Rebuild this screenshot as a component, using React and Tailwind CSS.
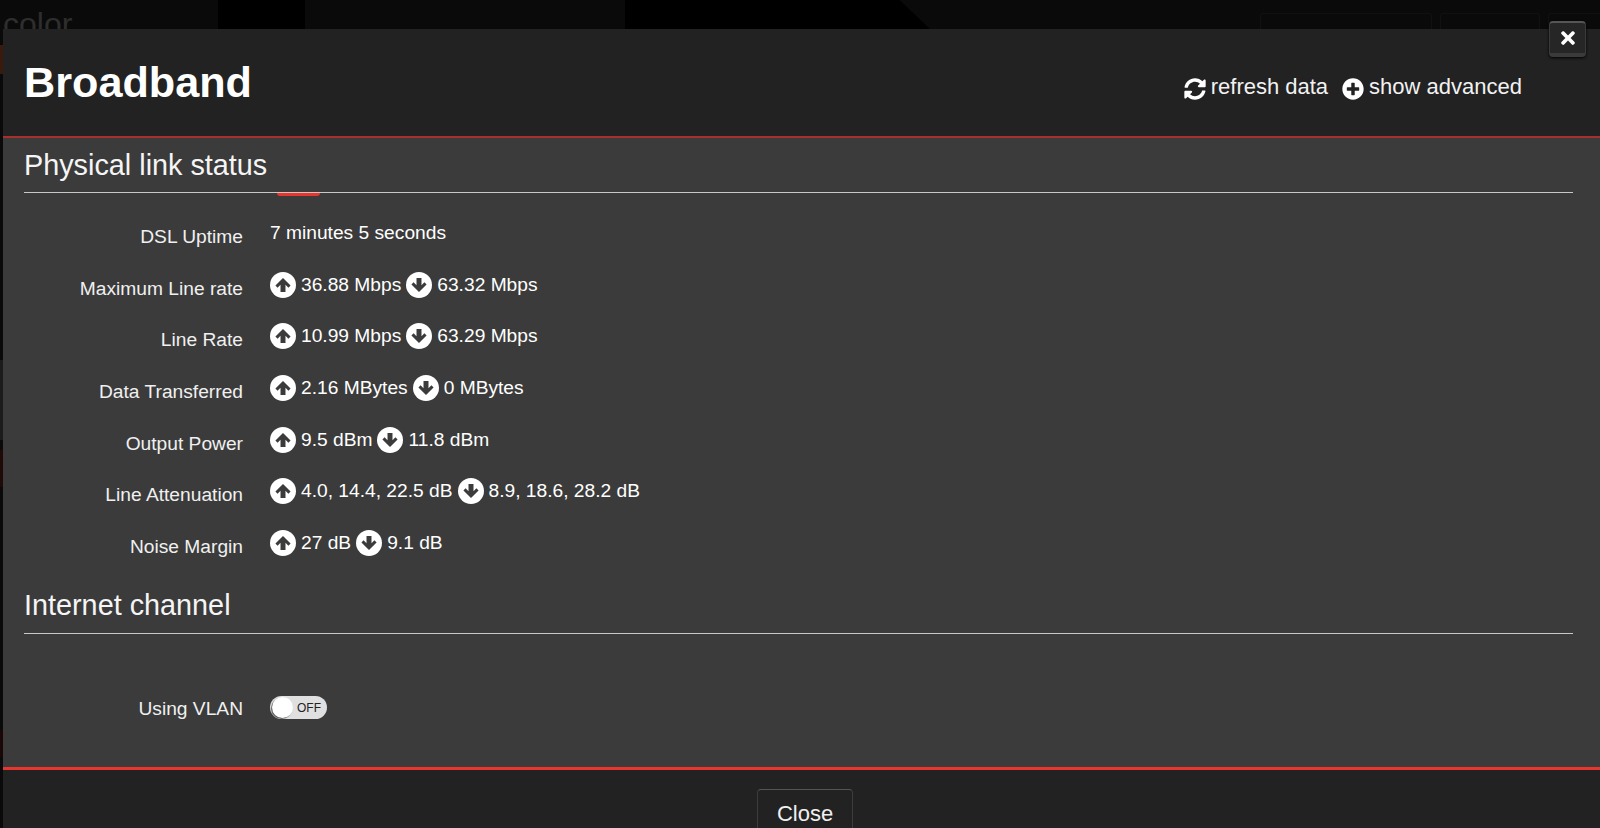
import React from "react";
import { FaSyncAlt, FaPlusCircle, FaTimes } from "react-icons/fa";

const rows = [
  { label: "Maximum Line rate", up: "36.88 Mbps", down: "63.32 Mbps" },
  { label: "Line Rate", up: "10.99 Mbps", down: "63.29 Mbps" },
  { label: "Data Transferred", up: "2.16 MBytes", down: "0 MBytes" },
  { label: "Output Power", up: "9.5 dBm", down: "11.8 dBm" },
  { label: "Line Attenuation", up: "4.0, 14.4, 22.5 dB", down: "8.9, 18.6, 28.2 dB" },
  { label: "Noise Margin", up: "27 dB", down: "9.1 dB" },
];

// round arrow badge, the package ones have a thinner arrow
function ArrowBadge({ down }) {
  return (
    <svg viewBox="0 0 24 24" className={`h-[26px] w-[26px] shrink-0 ${down ? "rotate-180" : ""}`}>
      <circle cx="12" cy="12" r="12" fill="#fff" />
      <path d="M12 5.5 19 12.5 17 14.5 14.3 11.8V18.5H9.7V11.8L7 14.5 5 12.5Z" fill="#3b3b3b" />
    </svg>
  );
}

function Row({ label, children }) {
  return (
    <div className="flex h-[51.7px] items-start">
      <div className="w-[219px] pt-[4px] text-right leading-[24px] text-[#f0f0f0]">{label}</div>
      <div className="ml-[27px] flex h-[24px] items-center gap-[5px] leading-[24px] text-white">{children}</div>
    </div>
  );
}

export default function App() {
  return (
    <div className="relative h-[828px] w-[1600px] overflow-hidden bg-[#0a0a0a] font-['Liberation_Sans',Arial,sans-serif] text-[19.2px]">
      {/* page behind the dialog */}
      <div className="absolute left-[218px] top-0 h-[29px] w-[87px] bg-black" />
      <div className="absolute left-[625px] top-0 h-[29px] w-[305px] bg-black [clip-path:polygon(0_0,90%_0,100%_100%,0_100%)]" />
      <div className="absolute left-[1260px] top-[13px] h-[16px] w-[172px] rounded-t-[3px] border border-b-0 border-[#111]" />
      <div className="absolute left-[1440px] top-[13px] h-[16px] w-[100px] rounded-t-[3px] border border-b-0 border-[#111]" />
      <div className="absolute left-[1548px] top-[13px] h-[16px] w-[52px] rounded-tl-[3px] border-l border-t border-[#111]" />
      <div className="absolute left-0 top-[45px] h-[29px] w-[3px] bg-[#3a1a0a]" />
      <div className="absolute left-0 top-[360px] h-[80px] w-[3px] bg-[#1c1c1c]" />
      <div className="absolute left-0 top-[450px] h-[37px] w-[3px] bg-[#1f0a07]" />
      <div className="absolute left-0 top-[730px] h-[27px] w-[3px] bg-[#1a0808]" />
      <div className="absolute left-[3px] top-[4px] text-[32px] font-light leading-[40px] text-[#2e2e2e]">color</div>

      <div className="absolute bottom-0 left-[3px] right-0 top-[29px] flex flex-col">
        <div className="flex h-[109px] shrink-0 items-start justify-between border-b-2 border-[#a5302e] bg-[#222] pl-[21px]">
          <h1 className="mt-[27px] text-[43.2px] font-bold leading-[52px] text-white">Broadband</h1>
          <div className="mr-[78px] mt-[45px] flex items-center text-[22px] leading-[26px] text-[#f2f2f2]">
            <FaSyncAlt className="mr-[5px] mt-[3px] text-[22px] text-white" />
            <span>refresh data</span>
            <FaPlusCircle className="ml-[14px] mr-[5px] mt-[3px] text-[22px] text-white" />
            <span>show advanced</span>
          </div>
        </div>

        <div className="relative flex-1 bg-[#3b3b3b] pl-[21px] pr-[27px]">
          <h2 className="flex h-[55px] items-end border-b border-[#c8c8c8] pb-[11px] text-[28.8px] leading-[32px] text-[#f5f5f5]">
            Physical link status
          </h2>
          <div className="absolute left-[274px] top-[55px] h-[3px] w-[43px] rounded-b-[6px] bg-[#e8352e]" />
          <div className="pt-[28px]">
            <Row label="DSL Uptime">
              <span>7 minutes 5 seconds</span>
            </Row>
            {rows.map((r) => (
              <Row key={r.label} label={r.label}>
                <ArrowBadge />
                <span>{r.up}</span>
                <ArrowBadge down />
                <span>{r.down}</span>
              </Row>
            ))}
          </div>
          <h2 className="flex h-[51px] items-end border-b border-[#c8c8c8] pb-[12px] text-[28.8px] leading-[32px] text-[#f5f5f5]">
            Internet channel
          </h2>
          <div className="mt-[61px] flex items-center">
            <div className="w-[219px] pt-[2px] text-right leading-[24px] text-[#f0f0f0]">Using VLAN</div>
            <div className="relative ml-[27px] flex h-[23px] w-[57px] items-center justify-end rounded-full bg-[#e0e0e0] pr-[6px] text-[12px] leading-none text-[#222]">
              OFF
              <span className="absolute left-[2px] top-[1px] h-[21px] w-[21px] rounded-full bg-white shadow-[-1px_1px_1px_#555]" />
            </div>
          </div>
        </div>

        <div className="flex h-[61px] shrink-0 justify-center border-t-[3px] border-[#e8352e] bg-[#222]">
          <button className="ml-[7px] mt-[19px] h-[48px] w-[96px] rounded-t-[4px] border border-b-0 border-[#3c3c3c] border-t-[#555] bg-[#222] text-[22px] text-[#f0f0f0]">
            Close
          </button>
        </div>
      </div>

      <button className="absolute left-[1549px] top-[21px] flex h-[36px] w-[37px] items-center justify-center rounded-[4px] border-x border-b-[4px] border-t-2 border-[#3a3a3a] border-t-[#555] bg-[#262626] shadow-[0_1px_3px_#000]">
        <FaTimes className="text-[20px] text-white" />
      </button>
    </div>
  );
}
